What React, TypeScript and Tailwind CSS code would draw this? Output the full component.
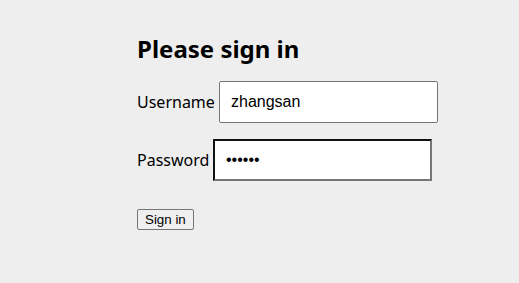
import React from "react";

export default function App() {
  return (
    <div className="min-h-[283px] w-full bg-[#eeeeee] pl-[137px] pt-[31px] text-black" style={{}}>
      <h1 className="m-0 text-[24px] font-bold leading-[36px] [font-family:'Noto_Sans',sans-serif]">Please sign in</h1>
      <div className="mt-[14px] flex items-center">
        <label className="w-[82px] text-[16px] [font-family:'Noto_Sans',sans-serif]">Username</label>
        <input
          type="text"
          defaultValue="zhangsan"
          className="h-[42px] w-[219px] rounded-[2px] border border-[#767676] bg-white px-[11px] text-[16px] text-black outline-none [font-family:'Liberation_Sans',Arial,sans-serif]"
        />
      </div>
      <div className="mt-[16px] flex items-center">
        <label className="w-[76px] text-[16px] [font-family:'Noto_Sans',sans-serif]">Password</label>
        <input
          type="password"
          defaultValue="123456"
          className="h-[42px] w-[219px] border-2 border-t-[#111111] border-l-[#111111] border-r-[#767676] border-b-[#767676] bg-white px-[11px] text-[16px] text-black outline-none [font-family:'Liberation_Sans',Arial,sans-serif]"
        />
      </div>
      <button className="mt-[28px] h-[21px] rounded-[2px] border border-[#767676] bg-[#efefef] px-[7px] text-[13.333px] leading-[15px] text-black [font-family:'Liberation_Sans',Arial,sans-serif]">
        Sign in
      </button>
    </div>
  );
}
